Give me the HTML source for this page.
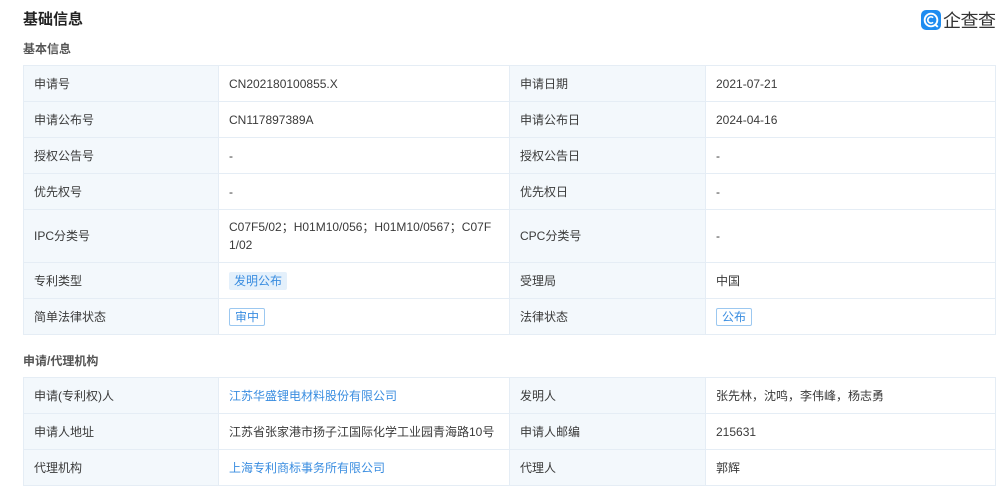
<!DOCTYPE html>
<html><head><meta charset="utf-8"><style>
body{margin:0;background:#fff;font-family:"Liberation Sans","Noto Sans CJK SC",sans-serif;width:1000px;height:490px;overflow:hidden;position:relative;color:#333}
.h1{position:absolute;left:23px;top:8px;font-size:15px;font-weight:bold;color:#222}
.h2{position:absolute;left:23px;font-size:12px;font-weight:bold;color:#555}
table{position:absolute;left:23px;width:972px;border-collapse:collapse;font-size:12px;table-layout:fixed}
td{border:1px solid #e5edf5;padding:0 10px;color:#3a3a3a;line-height:18px}
td.l{background:#f3f8fc}
.tag{display:inline-block;padding:0 5px;line-height:18px;border-radius:2px;color:#3a8de0}
.t1{background:#e4f0fb}
.t2{border:1px solid #9cc8f0;line-height:16px;padding:0 5px}
a{color:#3a8de0;text-decoration:none}
.logo{position:absolute;left:921px;top:7px;display:flex;align-items:center}
.logo .ic{width:20px;height:20px;border-radius:5px;background:#1e8cf0;position:relative}
.logo span{font-size:18px;color:#333;margin-left:2px;letter-spacing:-0.5px}
</style></head><body>
<div class="h1">基础信息</div>
<div class="logo"><div class="ic"><svg width="20" height="20" viewBox="0 0 19 19"><circle cx="9.5" cy="9.5" r="6" fill="none" stroke="#fff" stroke-width="1.8"/><path d="M11.5 7.3a3 3 0 1 0 0 4.4" fill="none" stroke="#fff" stroke-width="1.6"/><path d="M13 13.5l3 2.5" stroke="#fff" stroke-width="1.8"/></svg></div><span>企查查</span></div>
<div class="h2" style="top:40px">基本信息</div>
<table style="top:65px">
<colgroup><col style="width:195px"><col style="width:291px"><col style="width:196px"><col style="width:290px"></colgroup>
<tr style="height:36px"><td class="l">申请号</td><td>CN202180100855.X</td><td class="l">申请日期</td><td>2021-07-21</td></tr>
<tr style="height:36px"><td class="l">申请公布号</td><td>CN117897389A</td><td class="l">申请公布日</td><td>2024-04-16</td></tr>
<tr style="height:36px"><td class="l">授权公告号</td><td>-</td><td class="l">授权公告日</td><td>-</td></tr>
<tr style="height:36px"><td class="l">优先权号</td><td>-</td><td class="l">优先权日</td><td>-</td></tr>
<tr style="height:53px"><td class="l">IPC分类号</td><td style="word-break:break-all">C07F5/02；H01M10/056；H01M10/0567；C07F1/02</td><td class="l">CPC分类号</td><td>-</td></tr>
<tr style="height:36px"><td class="l">专利类型</td><td><span class="tag t1">发明公布</span></td><td class="l">受理局</td><td>中国</td></tr>
<tr style="height:36px"><td class="l">简单法律状态</td><td><span class="tag t2">审中</span></td><td class="l">法律状态</td><td><span class="tag t2">公布</span></td></tr>
</table>
<div class="h2" style="top:352px">申请/代理机构</div>
<table style="top:377px">
<colgroup><col style="width:195px"><col style="width:291px"><col style="width:196px"><col style="width:290px"></colgroup>
<tr style="height:36px"><td class="l">申请(专利权)人</td><td><a>江苏华盛锂电材料股份有限公司</a></td><td class="l">发明人</td><td>张先林，沈鸣，李伟峰，杨志勇</td></tr>
<tr style="height:36px"><td class="l">申请人地址</td><td>江苏省张家港市扬子江国际化学工业园青海路10号</td><td class="l">申请人邮编</td><td>215631</td></tr>
<tr style="height:36px"><td class="l">代理机构</td><td><a>上海专利商标事务所有限公司</a></td><td class="l">代理人</td><td>郭辉</td></tr>
</table>
</body></html>
